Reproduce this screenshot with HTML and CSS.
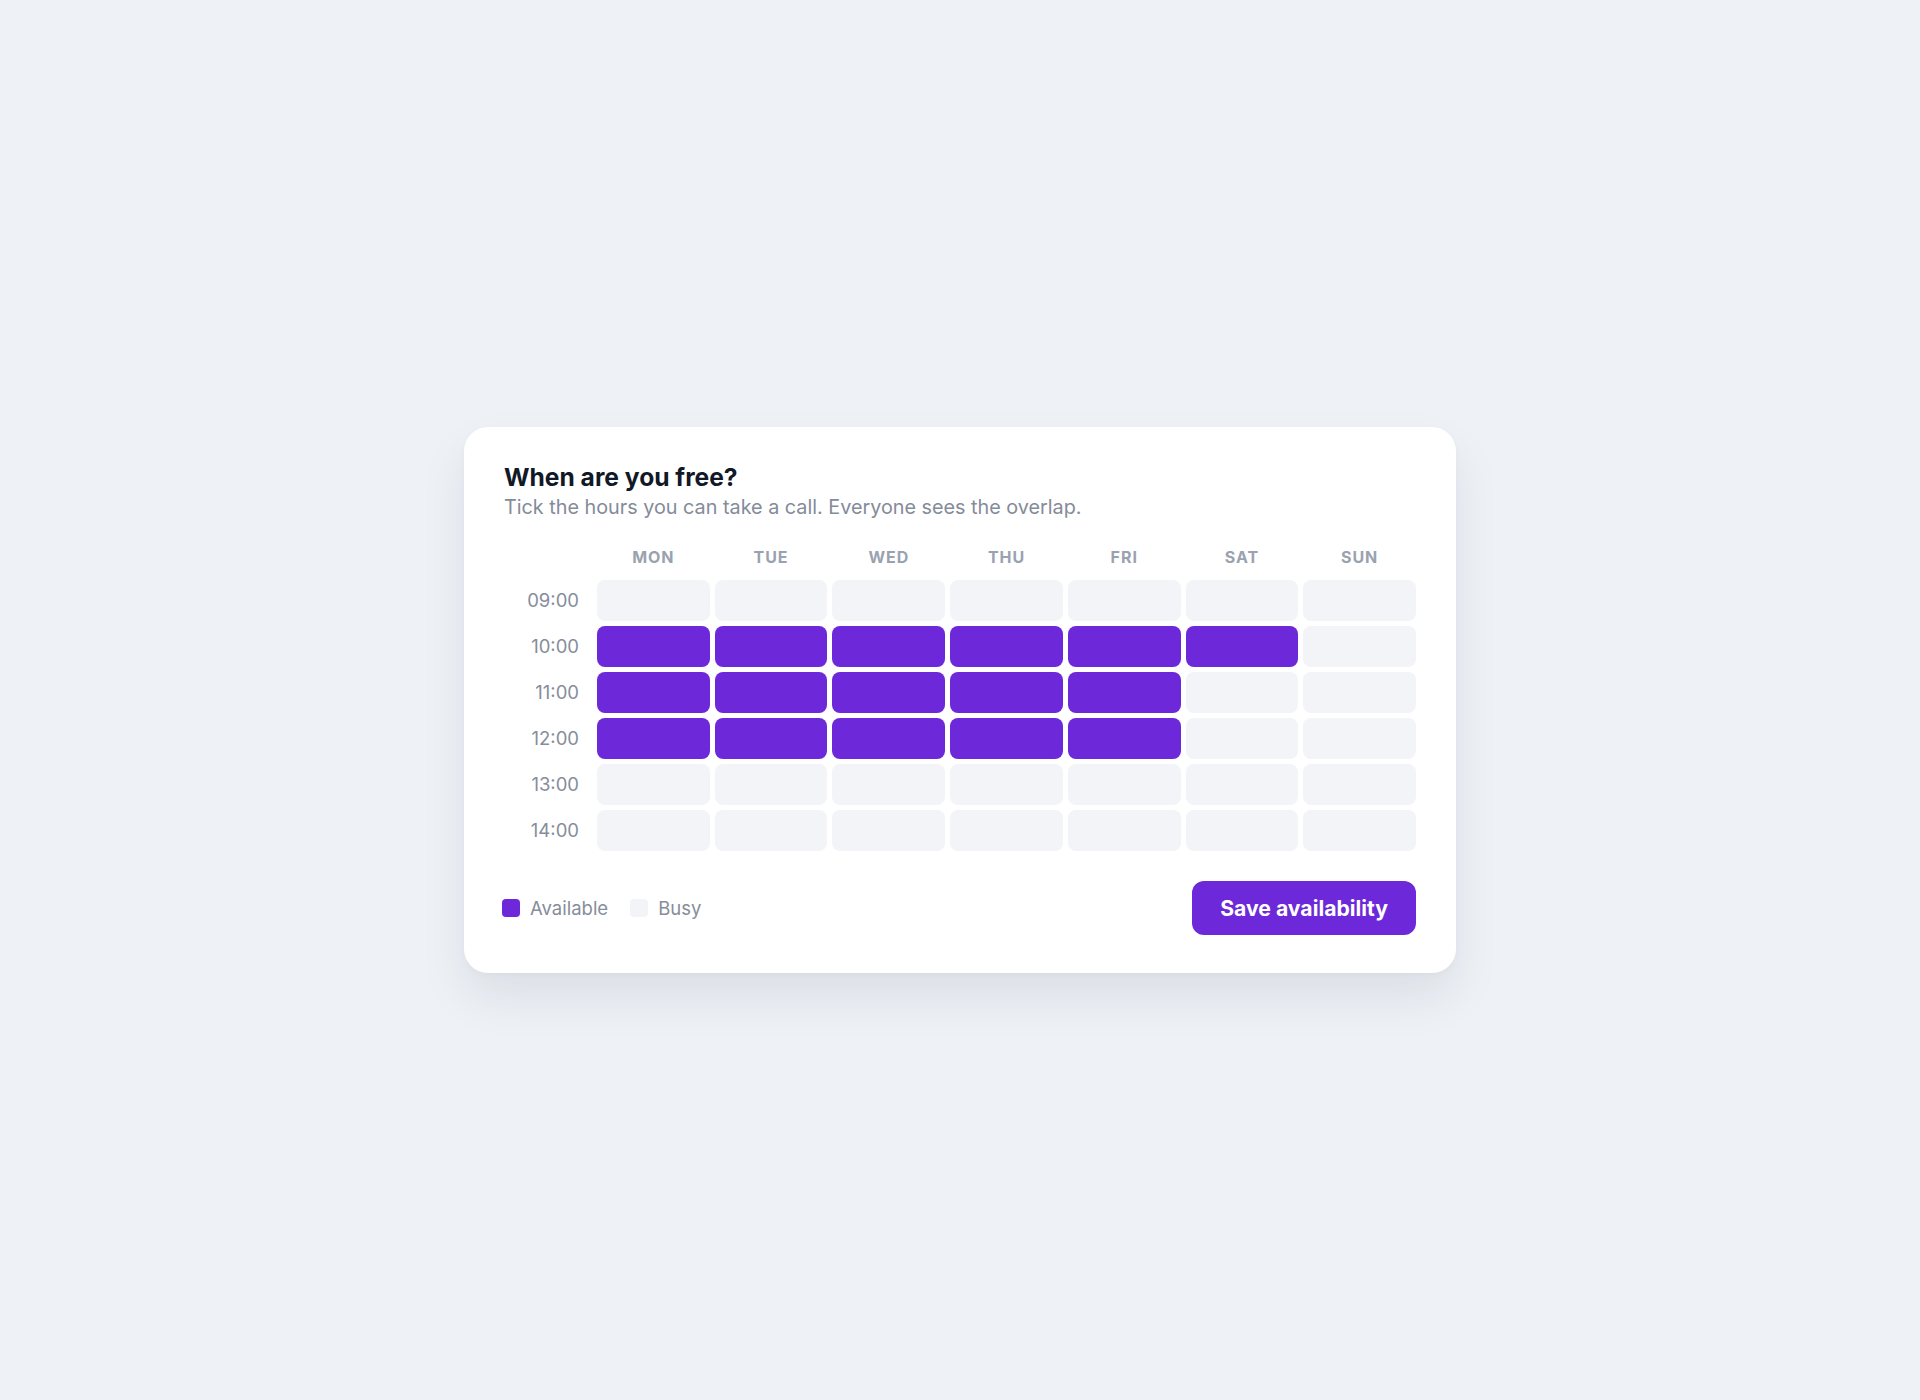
FILE: index.html
```html
<!DOCTYPE html>
<html lang="en">
<head>
<meta charset="utf-8">
<title>When are you free?</title>
<link rel="stylesheet" href="styles.css">
</head>
<body>
<main class="card">
  <h1 class="title">When are you free?</h1>
  <p class="subtitle">Tick the hours you can take a call. Everyone sees the overlap.</p>
  <div class="grid">
    <div class="corner"></div>
    <div class="day">MON</div>
    <div class="day">TUE</div>
    <div class="day">WED</div>
    <div class="day">THU</div>
    <div class="day">FRI</div>
    <div class="day">SAT</div>
    <div class="day">SUN</div>

    <div class="time">09:00</div>
    <div class="cell"></div><div class="cell"></div><div class="cell"></div><div class="cell"></div><div class="cell"></div><div class="cell"></div><div class="cell"></div>

    <div class="time">10:00</div>
    <div class="cell on"></div><div class="cell on"></div><div class="cell on"></div><div class="cell on"></div><div class="cell on"></div><div class="cell on"></div><div class="cell"></div>

    <div class="time">11:00</div>
    <div class="cell on"></div><div class="cell on"></div><div class="cell on"></div><div class="cell on"></div><div class="cell on"></div><div class="cell"></div><div class="cell"></div>

    <div class="time">12:00</div>
    <div class="cell on"></div><div class="cell on"></div><div class="cell on"></div><div class="cell on"></div><div class="cell on"></div><div class="cell"></div><div class="cell"></div>

    <div class="time">13:00</div>
    <div class="cell"></div><div class="cell"></div><div class="cell"></div><div class="cell"></div><div class="cell"></div><div class="cell"></div><div class="cell"></div>

    <div class="time">14:00</div>
    <div class="cell"></div><div class="cell"></div><div class="cell"></div><div class="cell"></div><div class="cell"></div><div class="cell"></div><div class="cell"></div>
  </div>
  <div class="footer">
    <div class="legend">
      <span class="swatch swatch-on"></span><span class="legend-label">Available</span>
      <span class="swatch swatch-off"></span><span class="legend-label">Busy</span>
    </div>
    <button class="save" type="button">Save availability</button>
  </div>
</main>
</body>
</html>
```

FILE: styles.css
```css
* { box-sizing: border-box; }

html, body {
  margin: 0;
  padding: 0;
}

body {
  min-height: 100vh;
  background: #eef1f6;
  font-family: Inter, "Noto Sans", "Liberation Sans", sans-serif;
  display: flex;
  align-items: center;
  justify-content: center;
}

.card {
  width: 992px;
  background: #ffffff;
  border-radius: 24px;
  padding: 35px 40px 38px;
  box-shadow: 0 24px 48px rgba(15, 23, 42, 0.08), 0 2px 6px rgba(15, 23, 42, 0.03);
}

.title {
  margin: 0;
  font-size: 24.6px;
  line-height: 30px;
  font-weight: 700;
  color: #111827;
}

.subtitle {
  margin: 3px 0 28px;
  font-size: 19.8px;
  color: #848b99;
}

.grid {
  display: grid;
  grid-template-columns: 88px repeat(7, 1fr);
  column-gap: 5px;
  row-gap: 5px;
}

.day {
  text-align: center;
  font-size: 16px;
  font-weight: 700;
  letter-spacing: 0.06em;
  color: #9aa2b0;
  padding-bottom: 7.5px;
}

.time {
  display: flex;
  align-items: center;
  justify-content: flex-end;
  padding-right: 13px;
  font-size: 18.5px;
  color: #868d9a;
}

.cell {
  height: 41px;
  border-radius: 8px;
  background: #f3f4f7;
}

.cell.on {
  background: #6d28d9;
}

.footer {
  margin-top: 30px;
  display: flex;
  align-items: center;
  justify-content: space-between;
}

.legend {
  display: flex;
  align-items: center;
  margin-left: -2px;
}

.swatch {
  width: 18px;
  height: 18px;
  border-radius: 4px;
  margin-right: 10px;
}

.swatch-on { background: #6d28d9; }
.swatch-off { background: #f3f4f7; margin-left: 22px; }

.legend-label {
  font-size: 18.5px;
  color: #868d9a;
}

.save {
  height: 54px;
  padding: 0 28px;
  border: none;
  border-radius: 12px;
  background: #6d28d9;
  color: #ffffff;
  font-family: inherit;
  font-size: 21.2px;
  font-weight: 700;
}
```
